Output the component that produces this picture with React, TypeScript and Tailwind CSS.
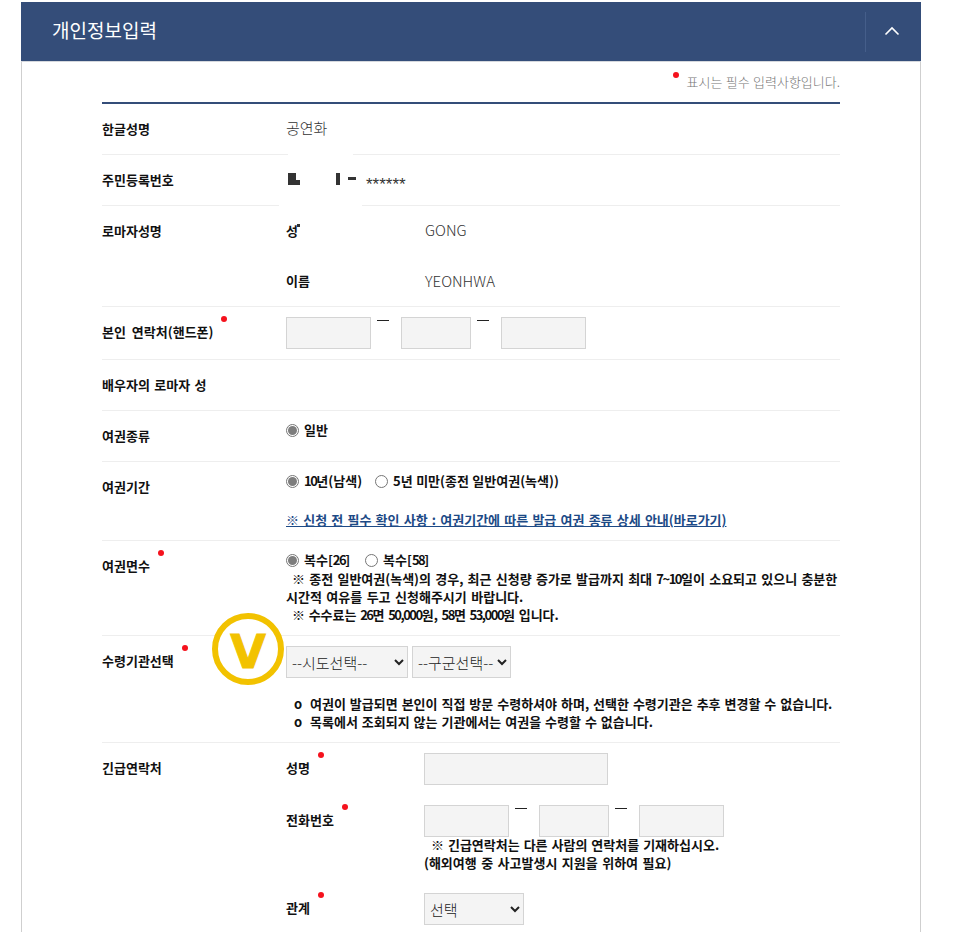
import React from "react";

const FONT = "[font-family:'Noto_Sans_CJK_KR','Liberation_Sans',sans-serif]";

function Dot({ className }: { className: string }) {
  return <span className={`absolute h-[6px] w-[6px] rounded-full bg-[#f5121d] ${className}`} />;
}

function Label({ children, dot }: { children: React.ReactNode; dot?: boolean }) {
  return (
    <span className="relative flex w-fit text-[13px] leading-[20px] font-bold whitespace-pre text-[#111]">
      {children}
      {dot && <Dot className="-right-[14px] -top-[6px]" />}
    </span>
  );
}

function Row({ label, dot, children, className = "", last }: { label: React.ReactNode; dot?: boolean; children?: React.ReactNode; className?: string; last?: boolean }) {
  return (
    <div className={`relative flex ${last ? "" : "border-b border-[#eeeeee]"} ${className}`}>
      <div className="w-[184px] shrink-0 pt-[15px]">
        <Label dot={dot}>{label}</Label>
      </div>
      <div className="min-w-0 flex-1">{children}</div>
    </div>
  );
}

function Box({ w }: { w: string }) {
  return <input readOnly aria-label="입력" className={`h-[32px] ${w} border border-[#d4d4d4] bg-[#f4f4f4]`} />;
}

function Dash() {
  return (
    <span className="flex w-[30px] shrink-0 justify-start pl-[6px] pt-[3px]">
      <span className="h-[1px] w-[12px] bg-[#222]" />
    </span>
  );
}

function Radio({ on }: { on?: boolean }) {
  return (
    <span className="flex h-[13px] w-[13px] shrink-0 items-center justify-center rounded-full border border-[#767676] bg-white">
      {on && <span className="h-[9px] w-[9px] rounded-full bg-[#7d7d7d]" />}
    </span>
  );
}

function Opt({ on, children, className = "" }: { on?: boolean; children: React.ReactNode; className?: string }) {
  return (
    <span className={`flex items-start ${className}`}>
      <span className="pt-[2px]"><Radio on={on} /></span>
      <span className="ml-[5px] text-[13px] leading-[16px] font-bold whitespace-nowrap text-[#111]">{children}</span>
    </span>
  );
}

function Num({ children }: { children: React.ReactNode }) {
  return <span className="tracking-[-1.5px]">{children}</span>;
}

const selectCls = "h-[32px] border border-[#d4d4d4] bg-[#f4f4f4] pl-[1px] text-[15px] font-light text-[#222]";

export default function App() {
  return (
    <div className={`h-[932px] w-[958px] overflow-hidden bg-white pt-[2px] [word-spacing:1.5px] ${FONT}`}>
      <div className="ml-[21px] w-[900px]">
        <div className="flex h-[60px] items-center justify-between border-b border-[#d5d8dd] bg-[#344d79]">
          <h2 className="pb-[3px] pl-[31px] text-[19px] leading-[24px] font-normal text-white">개인정보입력</h2>
          <div className="flex h-[40px] w-[56px] items-center justify-center border-l border-[#455e8a] pr-[3px] pb-[1px]">
            <svg width="16" height="10" viewBox="0 0 16 10" fill="none" stroke="#ffffff" strokeWidth="1.6"><path d="M1.5 8.5 L8 2 L14.5 8.5" /></svg>
          </div>
        </div>

        <div className="h-[900px] border-x border-[#cfcfcf] px-[80px]">
          <div className="flex h-[40px] items-start justify-end pt-[11px]">
            <span className="relative text-[13px] leading-[18px] font-light text-[#777] [word-spacing:0.5px]">
              <Dot className="-left-[13px] -top-[1px]" />
              표시는 필수 입력사항입니다.
            </span>
          </div>

          <div className="border-t-2 border-[#344d79]">
            <Row label="한글성명" className="h-[51px]">
              <div className="pt-[14px] text-[15px] leading-[20px] font-light text-[#333]">공연화</div>
            </Row>

            <Row label="주민등록번호" className="h-[51px]">
              <div className="flex h-[50px] items-start pt-[17px]">
                <span className="relative mt-[1px] ml-[2px] h-[12px] w-[12px] bg-[#333]">
                  <span className="absolute right-0 top-0 h-[7px] w-[4px] bg-white" />
                </span>
                <span className="ml-[36px] mt-[1px] h-[12px] w-[4px] bg-[#333]" />
                <span className="ml-[8px] mt-[5px] h-[3px] w-[8px] bg-[#333]" />
                <span className="ml-[10px] pt-[4px] [font-family:'Liberation_Sans',sans-serif] text-[17px] leading-[18px] text-[#333]">******</span>
              </div>
              <span className="absolute -top-[1px] left-[186px] h-[1px] w-[65px] bg-white" />
              <span className="absolute -bottom-[1px] left-[177px] h-[1px] w-[83px] bg-white" />
            </Row>

            <Row label="로마자성명" className="h-[101px]">
              <div className="flex h-[50px] items-start pt-[14px]">
                <span className="relative mt-[1px] w-[139px]"><Label>성</Label><span className="absolute left-[11px] top-[3px] h-[3px] w-[3px] bg-[#333]" /></span>
                <span className="text-[15px] leading-[20px] font-light text-[#333]">GONG</span>
              </div>
              <div className="flex h-[50px] items-start pt-[15px]">
                <span className="w-[139px]"><Label>이름</Label></span>
                <span className="text-[15px] leading-[20px] font-light text-[#333]">YEONHWA</span>
              </div>
            </Row>

            <Row label={<span className="[word-spacing:3px]">본인 연락처(핸드폰)</span>} dot className="h-[53px]">
              <div className="flex items-start pt-[10px]">
                <Box w="w-[85px]" />
                <Dash />
                <Box w="w-[70px]" />
                <Dash />
                <Box w="w-[85px]" />
              </div>
            </Row>

            <Row label="배우자의 로마자 성" className="h-[51px]" />

            <Row label="여권종류" className="h-[51px]">
              <div className="pt-[11px]"><Opt on>일반</Opt></div>
            </Row>

            <Row label="여권기간" className="h-[79px]">
              <div className="flex pt-[11px]">
                <Opt on><Num>10</Num>년(남색)</Opt>
                <Opt className="ml-[13px]"><span className="[word-spacing:0.5px]">5년 미만(종전 일반여권(녹색))</span></Opt>
              </div>
              <div className="pt-[22px] text-[13px] leading-[18px] font-bold whitespace-nowrap text-[#1d4a86] underline [word-spacing:1.25px]">
                ※ 신청 전 필수 확인 사항 : 여권기간에 따른 발급 여권 종류 상세 안내(바로가기)
              </div>
            </Row>

            <Row label="여권면수" dot className="h-[95px]">
              <div className="flex pt-[11px]">
                <Opt on>복수[<Num>26</Num>]</Opt>
                <Opt className="ml-[15px]">복수[<Num>58</Num>]</Opt>
              </div>
              <div className="pt-[2px] text-[13px] leading-[18px] font-bold text-[#111]">
                <div className="pl-[6px] whitespace-nowrap [word-spacing:1.3px]">※ 종전 일반여권(녹색)의 경우, 최근 신청량 증가로 발급까지 최대 <Num>7~10</Num>일이 소요되고 있으니 충분한</div>
                <div className="whitespace-nowrap">시간적 여유를 두고 신청해주시기 바랍니다.</div>
                <div className="pl-[6px] whitespace-nowrap [word-spacing:0.7px]">※ 수수료는 <Num>26</Num>면 <Num>50,000</Num>원, <Num>58</Num>면 <Num>53,000</Num>원 입니다.</div>
              </div>
            </Row>

            <Row label="수령기관선택" dot className="h-[107px]">
              <div className="flex gap-[4px] pt-[10px]">
                <select aria-label="시도" className={`${selectCls} w-[122px]`}><option>--시도선택--</option></select>
                <select aria-label="구군" className={`${selectCls} w-[99px]`}><option>--구군선택--</option></select>
              </div>
              <div className="pl-[8px] pt-[17px] text-[13px] leading-[18px] font-bold text-[#111] [word-spacing:1px]">
                <div className="whitespace-nowrap">o&nbsp;&nbsp;여권이 발급되면 본인이 직접 방문 수령하셔야 하며, 선택한 수령기관은 추후 변경할 수 없습니다.</div>
                <div className="whitespace-nowrap">o&nbsp;&nbsp;목록에서 조회되지 않는 기관에서는 여권을 수령할 수 없습니다.</div>
              </div>
              <div className="absolute left-[110px] -top-[23px] z-10 flex h-[72px] w-[72px] items-center justify-center rounded-full border-[6px] border-[#f2c200] bg-white pt-[5px]">
                <span className="[font-family:'DejaVu_Sans',sans-serif] text-[46px] leading-[46px] font-bold text-[#f2c200] [-webkit-text-stroke:1px_#f2c200]">V</span>
              </div>
            </Row>

            <Row label="긴급연락처" last>
              <div className="flex pt-[10px]">
                <div className="w-[138px] pt-[5px]"><Label dot>성명</Label></div>
                <Box w="w-[184px]" />
              </div>
              <div className="flex pt-[20px]">
                <div className="w-[138px] pt-[5px]"><Label dot>전화번호</Label></div>
                <div>
                  <div className="flex items-start">
                    <Box w="w-[85px]" />
                    <Dash />
                    <Box w="w-[70px]" />
                    <Dash />
                    <Box w="w-[85px]" />
                  </div>
                  <div className="-mt-[1px] text-[13px] leading-[18px] font-bold text-[#111]">
                    <div className="pl-[7px] whitespace-nowrap [word-spacing:1px]">※ 긴급연락처는 다른 사람의 연락처를 기재하십시오.</div>
                    <div className="whitespace-nowrap">(해외여행 중 사고발생시 지원을 위하여 필요)</div>
                  </div>
                </div>
              </div>
              <div className="flex pt-[21px]">
                <div className="w-[138px] pt-[5px]"><Label dot>관계</Label></div>
                <select aria-label="관계" className={`${selectCls} w-[100px]`}><option>선택</option></select>
              </div>
            </Row>
          </div>
        </div>
      </div>
    </div>
  );
}
